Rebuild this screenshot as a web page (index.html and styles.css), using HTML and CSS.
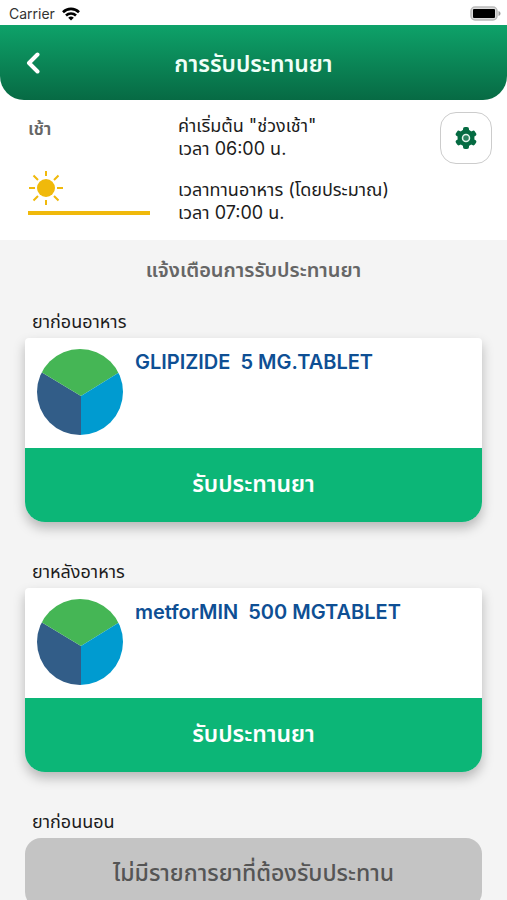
FILE: index.html
```html
<!DOCTYPE html>
<html lang="th">
<head>
    <meta charset="UTF-8">
    <meta name="viewport" content="width=device-width, initial-scale=1.0">
    <title>การรับประทานยา</title>
    <link rel="stylesheet" href="styles.css">
</head>
<body>
    <div class="status-bar">
        <span>Carrier</span>
        <svg class="wifi" width="18" height="14" viewBox="0 0 18 14" fill="none" stroke="#000" stroke-width="2.6">
            <path d="M1 5.2a11.4 11.4 0 0 1 16 0"/>
            <path d="M4 8.5a7.2 7.2 0 0 1 10 0"/>
            <path d="M9 13.6L6.2 10.8a4 4 0 0 1 5.6 0z" fill="#000" stroke="none"/>
        </svg>
        <svg class="battery" width="31" height="15" viewBox="0 0 31 15">
            <rect x="1" y="1" width="26" height="13" rx="4" fill="#ddd" stroke="#bbb" stroke-width="1.500"/>
            <rect x="3" y="3" width="22" height="9" rx="1" fill="#000"/>
            <path d="M28.500 5v5c1.300-.5 2-1.400 2-2.500s-.7-2-2-2.500z" fill="#999"/>
        </svg>
    </div>
    <header class="header">
        <button type="button" class="back-button" aria-label="ย้อนกลับ">
            <svg width="14" height="22" viewBox="0 0 14 22" fill="none" stroke="#fff" stroke-width="4" stroke-linecap="round" stroke-linejoin="round">
                <path d="M11.500 2.500L3 11l8.500 8.500"/>
            </svg>
        </button>
        <h1 class="title">การรับประทานยา</h1>
    </header>
    <section class="meal-time">
        <div class="period">
            <div class="period-name">เช้า</div>
            <svg class="sun" width="36" height="36" viewBox="0 0 36 36" fill="none" stroke="#f0b90b" stroke-width="2">
                <circle cx="18" cy="18" r="9" fill="#f0b90b" stroke="none"/>
                <path d="M18 1v5M18 30v5M1 18h6M29 18h6M5.500 5.500l4.500 4.500M26 26l4.500 4.500M5.500 30.500L10 26M26 10l4.500-4.500"/>
            </svg>
            <div class="period-line"></div>
        </div>
        <div class="times">
            <p>ค่าเริ่มต้น "ช่วงเช้า"<br>เวลา 06:00 น.</p>
            <p>เวลาทานอาหาร (โดยประมาณ)<br>เวลา 07:00 น.</p>
        </div>
        <button type="button" class="settings-button" aria-label="ตั้งค่า">
            <svg width="22" height="22" viewBox="0 0 22 22">
                <g fill="#056b42">
                    <circle cx="11" cy="11" r="8.500"/>
                    <rect x="8" y="0" width="6" height="22" rx="2"/>
                    <rect x="8" y="0" width="6" height="22" rx="2" transform="rotate(60 11 11)"/>
                    <rect x="8" y="0" width="6" height="22" rx="2" transform="rotate(120 11 11)"/>
                </g>
                <circle cx="11" cy="11" r="3.500" fill="#2c8460" stroke="#e3f4ec" stroke-width="1.500"/>
            </svg>
        </button>
    </section>
    <main class="content">
        <h2 class="heading">แจ้งเตือนการรับประทานยา</h2>

        <h3 class="group-name">ยาก่อนอาหาร</h3>
        <div class="card">
            <div class="medicine">
                <svg class="pill" width="86" height="86" viewBox="0 0 86 86">
                    <path d="M44 47V86H0V20.500z" fill="#325d88"/>
                    <path d="M44 47L0 20.500V0H86V21z" fill="#45b655"/>
                    <path d="M44 47L86 21V86H44z" fill="#009bd0"/>
                </svg>
                <div class="medicine-name">GLIPIZIDE&nbsp; 5 MG.TABLET</div>
            </div>
            <button type="button" class="take-button">รับประทานยา</button>
        </div>

        <h3 class="group-name">ยาหลังอาหาร</h3>
        <div class="card">
            <div class="medicine">
                <svg class="pill" width="86" height="86" viewBox="0 0 86 86">
                    <path d="M44 47V86H0V20.500z" fill="#325d88"/>
                    <path d="M44 47L0 20.500V0H86V21z" fill="#45b655"/>
                    <path d="M44 47L86 21V86H44z" fill="#009bd0"/>
                </svg>
                <div class="medicine-name">metforMIN&nbsp; 500 MGTABLET</div>
            </div>
            <button type="button" class="take-button">รับประทานยา</button>
        </div>

        <h3 class="group-name">ยาก่อนนอน</h3>
        <div class="empty">ไม่มีรายการยาที่ต้องรับประทาน</div>
    </main>
</body>
</html>
```
FILE: styles.css
```css
* {
    box-sizing: border-box;
}
body {
    font-family: Inter, "Noto Sans Thai", "Noto Sans", sans-serif;
    background-color: #fff;
    color: #1c1c1c;
    margin: 0;
    height: 100vh;
    display: flex;
    flex-direction: column;
    overflow: hidden;
}
h1, h2, h3, p {
    margin: 0;
}
button {
    font-family: inherit;
    border: none;
    padding: 0;
    cursor: pointer;
}
.status-bar {
    display: flex;
    align-items: center;
    flex-shrink: 0;
    height: 25px;
    padding: 2px 6px 0 9px;
    font-size: 14px;
    color: #333;
}
.wifi {
    margin-left: 7px;
}
.battery {
    margin-left: auto;
}
.header {
    display: grid;
    grid-template-columns: 66px 1fr 66px;
    align-items: center;
    flex-shrink: 0;
    height: 75px;
    background: linear-gradient(#0ea269, #076a44);
    border-radius: 0 0 24px 24px;
}
.back-button {
    display: flex;
    justify-content: center;
    background: none;
}
.title {
    padding-top: 4px;
    font-size: 23px;
    font-weight: 600;
    text-align: center;
    color: #f0fff8;
}
.meal-time {
    display: flex;
    align-items: flex-start;
    flex-shrink: 0;
    padding: 12px 15px 16px 28px;
}
.period {
    width: 150px;
    padding-right: 28px;
}
.period-name {
    font-size: 18px;
    line-height: 34px;
    font-weight: 600;
    color: #666;
}
.sun {
    display: block;
    margin-top: 24px;
}
.period-line {
    height: 4px;
    margin-top: 5px;
    background-color: #f0b90b;
}
.times {
    flex: 1;
    display: flex;
    flex-direction: column;
    gap: 18px;
    padding-top: 2px;
    font-size: 18px;
    line-height: 23px;
}
.settings-button {
    display: flex;
    align-items: center;
    justify-content: center;
    width: 52px;
    height: 52px;
    background-color: #fff;
    border: 1px solid #ccc;
    border-radius: 16px;
}
.content {
    flex: 1;
    overflow: hidden;
    padding: 16px 25px;
    background-color: #f4f4f4;
}
.heading {
    font-size: 20px;
    line-height: 28px;
    font-weight: 600;
    text-align: center;
    color: #666;
    margin-bottom: 24px;
}
.group-name {
    font-size: 18px;
    line-height: 28px;
    font-weight: 400;
    padding-left: 7px;
    margin-bottom: 2px;
}
.card {
    margin-bottom: 36px;
    background-color: #fff;
    border-radius: 4px 4px 20px 20px;
    box-shadow: 0 6px 12px rgba(0, 0, 0, 0.25);
}
.medicine {
    display: flex;
    gap: 12px;
    height: 110px;
    padding: 11px 12px;
}
.pill {
    border-radius: 50%;
}
.medicine-name {
    font-size: 20px;
    line-height: 26px;
    font-weight: 600;
    color: #0e4f94;
}
.take-button {
    width: 100%;
    height: 74px;
    background-color: #0cb677;
    color: #fff;
    font-size: 23px;
    font-weight: 600;
    border-radius: 0 0 20px 20px;
}
.empty {
    padding: 20px;
    background-color: #c4c4c4;
    border-radius: 16px;
    font-size: 23px;
    line-height: 30px;
    font-weight: 500;
    text-align: center;
    color: #555;
}
```
